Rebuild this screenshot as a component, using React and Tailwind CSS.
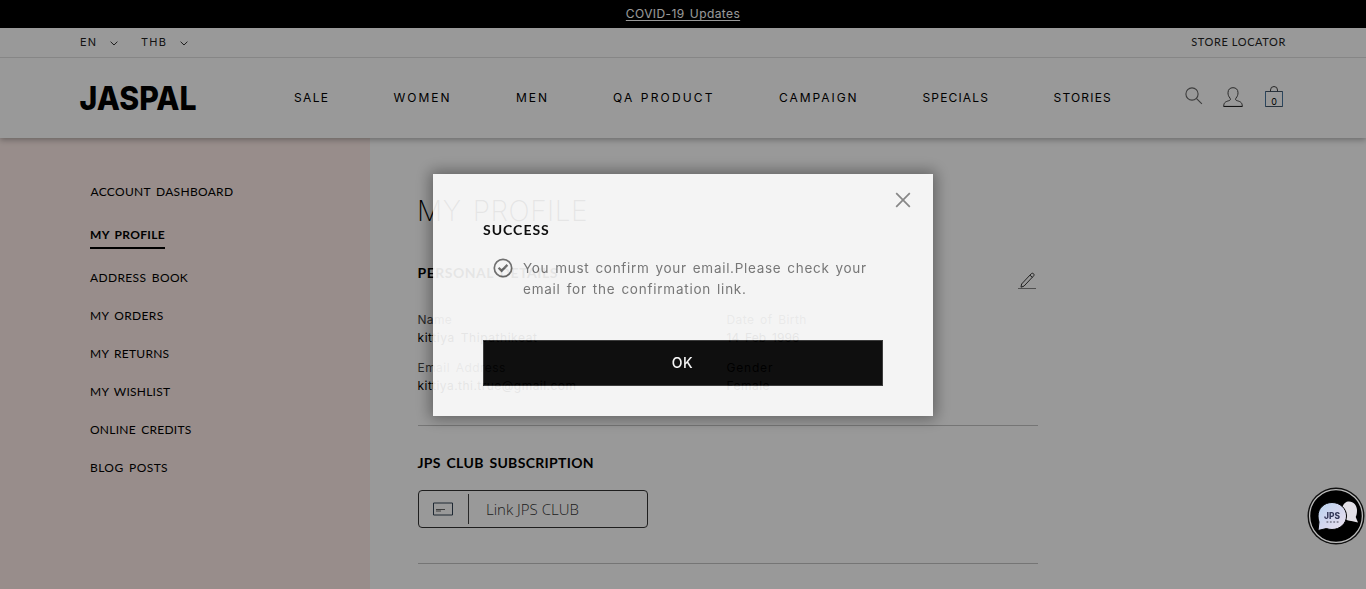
const NAV = [
  { label: "SALE", cls: "w-[99.5px] tracking-[1.34px]" },
  { label: "WOMEN", cls: "w-[122.5px] tracking-[2px]" },
  { label: "MEN", cls: "w-[97px] tracking-[1.95px]" },
  { label: "QA PRODUCT", cls: "w-[166px] tracking-[2.15px] [word-spacing:1px]" },
  { label: "CAMPAIGN", cls: "w-[143.5px] tracking-[1.95px]" },
  { label: "SPECIALS", cls: "w-[131px] tracking-[1.15px]" },
  { label: "STORIES", cls: "w-[80px] tracking-[1.2px]" },
];

const LINKS = [
  { label: "ADDRESS BOOK", cls: "tracking-[0.36px]" },
  { label: "MY ORDERS", cls: "tracking-[0.35px]" },
  { label: "MY RETURNS", cls: "tracking-[0.26px]" },
  { label: "MY WISHLIST", cls: "tracking-[0.24px]" },
  { label: "ONLINE CREDITS", cls: "tracking-[0.25px]" },
  { label: "BLOG POSTS", cls: "tracking-[0.42px]" },
];

function Chevron() {
  return (
    <svg width="8" height="5" viewBox="0 0 8 5" fill="none" stroke="#333" className="mt-[2px]">
      <path d="M.6.7 4 4 7.4.7" />
    </svg>
  );
}

function Field({ label, labelCls, value, valueCls }) {
  return (
    <div className="h-[48px] font-['Inter',sans-serif] text-[12px] leading-[18px] whitespace-nowrap">
      <div className={labelCls}>{label}</div>
      <div className={valueCls}>{value}</div>
    </div>
  );
}

function Header() {
  return (
    <header className="relative h-[110px] bg-white shadow-[0_2px_6px_rgba(0,0,0,0.3)]">
      <div className="flex h-[30px] items-center border-b border-[#e0e0e0] pr-[80px] pl-[80px] font-['Inter',sans-serif] text-[11px] leading-none text-[#222]">
        <span className="w-[30px] tracking-[1.1px]">EN</span>
        <Chevron />
        <span className="ml-[23px] w-[39px] tracking-[1.2px]">THB</span>
        <Chevron />
        <span className="ml-auto -mt-[2px] font-['Lato',sans-serif] tracking-[0.6px]">STORE LOCATOR</span>
      </div>
      <div className="flex h-[80px] items-center pl-[80px]">
        <svg width="118" height="32" viewBox="0 0 118 32" className="mt-px shrink-0 overflow-visible">
          <text x="-0.5" y="27.3" fontFamily="Inter" fontWeight="800" fontSize="33" textLength="117" lengthAdjust="spacingAndGlyphs">
            JASPAL
          </text>
        </svg>
        <nav className="ml-[96px] flex w-[840px] font-['Inter',sans-serif] text-[12px] leading-none whitespace-nowrap text-black">
          {NAV.map((n) => (
            <a key={n.label} className={`shrink-0 ${n.cls}`}>{n.label}</a>
          ))}
        </nav>
        <div className="-mt-[2px] ml-[51px] flex items-start">
          <svg width="18" height="18" viewBox="0 0 18 18" fill="none" stroke="#666" strokeWidth="1.1">
            <circle cx="7" cy="7" r="6.1" />
            <path d="m11.3 11.3 5.600 5.600" />
          </svg>
          <svg width="20" height="20" viewBox="0 0 20 20" fill="none" stroke="#444" className="ml-[20px]">
            <path d="M.7 19.400h18.600c0-4.600-2.600-4.800-6-6-.9-.4-.9-1.400-.3-2.300 1.400-1.700 2-3.300 2-5.300C15 2.400 13 .7 10 .7S5 2.400 5 5.800c0 2 .6 3.600 2 5.300.6.9.6 1.900-.3 2.300-3.400 1.200-6 1.400-6 6Z" />
            <path d="M.7 19.500h18.600" stroke="#222" />
          </svg>
          <svg width="20" height="22" viewBox="0 0 20 22" fill="none" className="-mt-px ml-[21px]">
            <path d="M1.500 5.500h17v15h-17z" stroke="#456" />
            <path d="M1.500 5.500v15M18.500 5.500v15" stroke="#47759e" />
            <path d="M6.500 5.500V4a3.500 3.500 0 0 1 7 0v1.500" stroke="#444" />
            <text x="10" y="18.500" textAnchor="middle" fontFamily="Inter" fontSize="9" fill="#000">0</text>
          </svg>
        </div>
      </div>
    </header>
  );
}

function Sidebar() {
  return (
    <aside className="w-[370px] shrink-0 bg-[#fdece8] pt-[45px] pl-[90px] font-['Lato',sans-serif] text-[12px] leading-[18px] text-black [word-spacing:2px]">
      <div className="h-[43px] pl-[0.5px] tracking-[0.31px]">ACCOUNT DASHBOARD</div>
      <div className="h-[43px]">
        <span className="inline-block h-[23px] w-[75px] border-b-2 border-black font-bold tracking-[0.32px] whitespace-nowrap">MY PROFILE</span>
      </div>
      {LINKS.map((l) => (
        <div key={l.label} className={`h-[38px] ${l.cls}`}>{l.label}</div>
      ))}
    </aside>
  );
}

function Profile() {
  return (
    <main className="flex-1 bg-white pt-[53px] pl-[48px] text-black">
      <div className="w-[620px]">
        <h1 className="-ml-px h-[73px] font-['Inter',sans-serif] text-[28px] leading-[40px] font-[250] tracking-[0.5px] [word-spacing:3px]">MY PROFILE</h1>
        <section className="h-[162px] border-b border-[#c4c4c4]">
          <div className="flex h-[47px] justify-between">
            <h2 className="-ml-[0.5px] font-['Lato',sans-serif] text-[14px] leading-[18px] font-bold tracking-[0.5px] [word-spacing:2px]">PERSONAL DETAILS</h2>
            <svg width="20" height="18" viewBox="0 0 20 18" fill="none" stroke="#222" strokeWidth="0.9" className="mt-[8px] mr-px">
              <path d="M4 15.200 4.600 12 14.300 1.700c1.400-1.300 3.600.5 2.400 2.100L7 14.100ZM13 3.200l2.400 2.200" />
              <path d="M1 16.500h18" stroke="#777" />
            </svg>
          </div>
          <div className="-ml-[0.5px] grid grid-cols-[309px_1fr]">
            <Field label="Name" labelCls="text-[#444] tracking-[0.3px]" value="kittiya Thipathikeat" valueCls="tracking-[0.56px] [word-spacing:2px]" />
            <Field label="Date of Birth" labelCls="text-[#444] tracking-[0.4px] [word-spacing:2px]" value="14 Feb 1996" valueCls="tracking-[0.15px] [word-spacing:2px]" />
            <Field label="Email Address" labelCls="text-[#444] tracking-[0.44px] [word-spacing:2px]" value="kittiya.thi.true@gmail.com" valueCls="tracking-[0.47px]" />
            <Field label="Gender" labelCls="tracking-[0.8px]" value="Female" valueCls="tracking-[0.45px]" />
          </div>
        </section>
        <section className="h-[138px] border-b border-[#c4c4c4] pt-[28px]">
          <h2 className="-ml-[0.5px] font-['Lato',sans-serif] text-[14px] leading-[18px] font-bold tracking-[0.32px] [word-spacing:2px]">JPS CLUB SUBSCRIPTION</h2>
          <button className="mt-[18px] flex h-[38px] w-[230px] items-center rounded-[4px] border border-[#333]">
            <span className="flex h-[30px] w-[50px] items-center border-r border-[#444] pl-[14px]">
              <svg width="20" height="14" viewBox="0 0 20 14" fill="none">
                <path d="M.5 1h19v12H.5z" stroke="#345" />
                <path d="M3 7.500h9M3 9h5" stroke="#666" />
              </svg>
            </span>
            <span className="pl-[17px] font-['Open_Sans',sans-serif] text-[15px] leading-none font-light text-[#333]">Link JPS CLUB</span>
          </button>
        </section>
      </div>
    </main>
  );
}

function Dialog() {
  return (
    <div className="fixed inset-0 flex items-start justify-center bg-black/40 pt-[174px]">
      <div className="h-[242px] w-[500px] bg-[#fefefe] px-[50px] pt-[47px] opacity-90 shadow-[0_0_14px_3px_rgba(0,0,0,0.4)]">
        <div className="flex h-[37px] items-start justify-between">
          <h3 className="font-['Lato',sans-serif] text-[14px] leading-[18px] font-bold tracking-[1px] text-black">SUCCESS</h3>
          <svg width="16" height="16" viewBox="0 0 16 16" stroke="#858585" strokeWidth="1.7" className="-mt-[29.500px] -mr-[28px]">
            <path d="m1.200 1.200 13.600 13.600M14.800 1.200 1.200 14.800" />
          </svg>
        </div>
        <div className="flex h-[82px] pl-[10px]">
          <svg width="20" height="20" viewBox="0 0 20 20" fill="none" stroke="#6c6c6c" className="mr-[10px] shrink-0">
            <circle cx="10" cy="10" r="8.700" strokeWidth="1.7" />
            <path d="m5.600 9.800 3 3 5.800-5.900" strokeWidth="2.3" />
          </svg>
          <p className="font-['Inter',sans-serif] text-[13.5px] leading-[21px] whitespace-nowrap text-[#747474] [word-spacing:1.5px]">
            <span className="tracking-[0.7px]">You must confirm your email.Please check your</span>
            <br />
            <span className="tracking-[0.76px]">email for the confirmation link.</span>
          </p>
        </div>
        <button className="flex h-[46px] w-[400px] items-center justify-center border border-[#333] bg-black pr-px pb-[2px] font-['Inter',sans-serif] text-[14px] font-medium tracking-[0.5px] text-white">
          OK
        </button>
      </div>
    </div>
  );
}

function Chat() {
  return (
    <svg width="58" height="58" viewBox="0 0 58 58" className="fixed top-[487px] left-[1307px]">
      <defs>
        <linearGradient id="bubble" x1="0" x2="1" y1="0" y2="1">
          <stop offset="0" stopColor="#b9d3ee" />
          <stop offset="0.5" stopColor="#d3d6ee" />
          <stop offset="1" stopColor="#ece2ee" />
        </linearGradient>
      </defs>
      <circle cx="29" cy="29" r="28.500" fill="#111" />
      <circle cx="29" cy="29" r="26.400" fill="#000" stroke="#bbb" strokeWidth="1.3" />
      <path d="M41 14.500c5.500-.5 9 3.500 9 9 0 2.500-.3 4.500-1.300 6.500l2.300 5.500-6.700-1.500c-5.500 0-9.500-4-9.500-9.800 0-5 2.500-9.200 6.200-9.700Z" fill="#e2dfe6" />
      <path d="M25 15.500c8 0 14.500 6 14.500 13.500S33 42.500 25 42.500c-2 0-4-.3-5.500-1l-8.500 2 1-8.500C11.300 33.200 11 31 11 29c0-7.500 6-13.500 14-13.500Z" fill="url(#bubble)" stroke="#000" />
      <text x="25" y="32" textAnchor="middle" fontFamily="Inter" fontWeight="800" fontSize="9" fill="#343858" textLength="16" lengthAdjust="spacingAndGlyphs">JPS</text>
      <path d="M19.500 35h12" stroke="#778" strokeWidth="1.3" strokeDasharray="1.8 1.6" />
    </svg>
  );
}

export default function App() {
  return (
    <div className="flex h-[589px] w-full flex-col overflow-hidden bg-white">
      <div className="flex h-[28px] shrink-0 items-center justify-center bg-black">
        <a className="font-['Inter',sans-serif] text-[12px] leading-none tracking-[0.4px] text-white underline underline-offset-2 [word-spacing:1.5px]">COVID-19 Updates</a>
      </div>
      <Header />
      <div className="flex flex-1">
        <Sidebar />
        <Profile />
      </div>
      <Dialog />
      <Chat />
    </div>
  );
}
